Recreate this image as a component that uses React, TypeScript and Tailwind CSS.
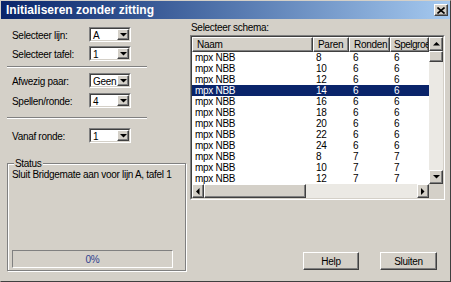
import React from "react";

const FONT = "font-['Liberation_Sans',Arial,sans-serif] tracking-[-0.3px]";

const ROWS = [
  ["8", "6", "6"],
  ["10", "6", "6"],
  ["12", "6", "6"],
  ["14", "6", "6"],
  ["16", "6", "6"],
  ["18", "6", "6"],
  ["20", "6", "6"],
  ["22", "6", "6"],
  ["24", "6", "6"],
  ["8", "7", "7"],
  ["10", "7", "7"],
  ["12", "7", "7"],
];

const COLS = [
  { label: "Naam", w: "w-[121px]" },
  { label: "Paren", w: "w-[36px]" },
  { label: "Ronden", w: "w-[41px]" },
  { label: "Spelgroe", w: "w-[39px]" },
];

// classic win32 bevels
const raised =
  "border border-white border-r-[#404040] border-b-[#404040] shadow-[inset_-1px_-1px_0_#808080] bg-[#d4d0c8]";

function Sunken({ className = "", children }: { className?: string; children?: React.ReactNode }) {
  return (
    <div className={`border border-[#808080] border-r-white border-b-white ${className}`}>
      <div className="h-full w-full border border-[#404040] border-r-[#d4d0c8] border-b-[#d4d0c8]">
        {children}
      </div>
    </div>
  );
}

function Arrow({ dir }: { dir: "up" | "down" | "left" | "right" }) {
  const d = {
    up: "M0 3.5h7L3.5 0z",
    down: "M0 0h7L3.5 3.5z",
    left: "M3.5 0v7L0 3.5z",
    right: "M0 0v7l3.5-3.5z",
  }[dir];
  const vert = dir === "up" || dir === "down";
  return (
    <svg width={vert ? 7 : 4} height={vert ? 4 : 7} viewBox={vert ? "0 0 7 4" : "0 0 4 7"}>
      <path d={d} fill="#000" />
    </svg>
  );
}

function Combo({ value }: { value: string }) {
  return (
    <Sunken className="h-[15px] w-[42px]">
      <div className="flex h-full bg-white">
        <span className="flex-1 pl-[2px] pt-[1px] text-[10px] leading-[11px]">{value}</span>
        <span className={`flex w-[12px] items-center justify-center ${raised}`}>
          <Arrow dir="down" />
        </span>
      </div>
    </Sunken>
  );
}

function Field({ label, value, className = "" }: { label: string; value: string; className?: string }) {
  return (
    <div className={`flex items-center ${className}`}>
      <span className="w-[82px] pl-[5px] pt-[1px] text-[10px] leading-[11px]">{label}</span>
      <Combo value={value} />
    </div>
  );
}

function Separator({ className = "" }: { className?: string }) {
  return <div className={`h-[2px] w-[140px] border-t border-[#808080] border-b border-b-white ${className}`} />;
}

function ListView() {
  return (
    <Sunken className="h-[165px] w-[255px]">
      <div className="flex h-full flex-col bg-white">
        <div className="flex min-h-0 flex-1">
          <div className="flex w-[237px] flex-col overflow-hidden">
            <div className="flex h-[15px] shrink-0">
              {COLS.map((c, i) => (
                <div
                  key={c.label}
                  className={`${c.w} ${raised} shrink-0 overflow-hidden whitespace-nowrap pt-[1px] text-[10px] leading-[11px] ${
                    i === 3 ? "pl-[3px] tracking-[-0.5px]" : "pl-[4px]"
                  }`}
                >
                  {c.label}
                </div>
              ))}
            </div>
            {ROWS.map((r, i) => {
              const sel = i === 3;
              return (
                <div
                  key={i}
                  className={`flex h-[11px] shrink-0 text-[10px] leading-[11px] ${
                    sel ? "bg-[#0a246a] text-white" : "text-black"
                  }`}
                >
                  <span className="w-[121px] pl-[3px]">mpx NBB</span>
                  <span className="w-[36px] pl-[3px]">{r[0]}</span>
                  <span className="w-[41px] pl-[4px]">{r[1]}</span>
                  <span className="w-[39px] pl-[4px]">{r[2]}</span>
                </div>
              );
            })}
          </div>
          <div className="flex w-[14px] flex-col bg-[#ebe9e4]">
            <div className={`flex h-[14px] items-center justify-center ${raised}`}>
              <Arrow dir="up" />
            </div>
            <div className={`h-[11px] ${raised}`} />
            <div className="flex-1" />
            <div className={`flex h-[14px] items-center justify-center ${raised}`}>
              <Arrow dir="down" />
            </div>
          </div>
        </div>
        <div className="flex h-[14px] shrink-0">
          <div className="flex w-[237px] bg-[#ebe9e4]">
            <div className={`flex w-[12px] items-center justify-center ${raised}`}>
              <Arrow dir="left" />
            </div>
            <div className={`w-[102px] ${raised}`} />
            <div className="flex-1" />
            <div className={`flex w-[12px] items-center justify-center ${raised}`}>
              <Arrow dir="right" />
            </div>
          </div>
          <div className="w-[14px] bg-[#d4d0c8]" />
        </div>
      </div>
    </Sunken>
  );
}

function Button({ label, w }: { label: string; w: string }) {
  return (
    <button
      className={`flex h-[18px] ${w} items-center justify-center border border-white border-r-[#404040] border-b-[#404040] bg-[#d4d0c8] shadow-[inset_-1px_-1px_0_#808080] text-[10px] leading-[11px] text-black`}
    >
      {label}
    </button>
  );
}

export default function App() {
  return (
    <div
      className={`${FONT} flex h-[282px] w-[451px] flex-col overflow-hidden border border-[#d4d0c8] border-r-[#404040] border-b-[#404040] bg-[#d4d0c8] text-black`}
    >
      {/* title bar */}
      <div className="flex h-[18px] shrink-0 items-center bg-linear-to-r from-[#0a246a] to-[#a6caf0] pl-[5px] pr-[2px]">
        <span className="flex-1 text-[12px] font-bold leading-[12px] tracking-normal text-white">
          Initialiseren zonder zitting
        </span>
        <span className={`flex h-[12px] w-[14px] items-center justify-center ${raised}`}>
          <svg width="8" height="7" viewBox="0 0 8 7">
            <path d="M0.5 0.5l7 6M7.5 0.5l-7 6" stroke="#000" strokeWidth="1.6" />
          </svg>
        </span>
      </div>

      <div className="flex flex-1">
        {/* left column */}
        <div className="ml-[6px] flex w-[180px] flex-col">
          <Field label="Selecteer lijn:" value="A" className="mt-[8px]" />
          <Field label="Selecteer tafel:" value="1" className="mt-[4px]" />
          <Separator className="mt-[5px]" />
          <Field label="Afwezig paar:" value="Geen" className="mt-[5px]" />
          <Field label="Spellen/ronde:" value="4" className="mt-[5px]" />
          <Separator className="mt-[9px]" />
          <Field label="Vanaf ronde:" value="1" className="mt-[9px]" />

          <div className="relative mt-[20px] flex h-[108px] w-[179px] flex-col border border-[#808080] shadow-[1px_1px_0_white,inset_1px_1px_0_white]">
            <span className="absolute -top-[6px] left-[6px] bg-[#d4d0c8] px-[1px] text-[10px] leading-[11px]">
              Status
            </span>
            <p className="pl-[4px] pt-[5px] text-[10px] leading-[11px] whitespace-nowrap">
              Sluit Bridgemate aan voor lijn A, tafel 1
            </p>
            <div className="ml-[4px] mt-auto mb-[2px] flex h-[18px] w-[161px] items-center justify-center border border-[#808080] border-r-white border-b-white text-[10px] leading-[11px] text-[#2e3f8f]">
              0%
            </div>
          </div>
        </div>

        {/* right column */}
        <div className="ml-[3px] flex w-[255px] flex-col">
          <span className="mt-[3px] pl-[1px] text-[10px] leading-[11px]">Selecteer schema:</span>
          <div className="mt-[2px]">
            <ListView />
          </div>
          <div className="mt-[52px] flex justify-end gap-[21px] pr-[8px]">
            <Button label="Help" w="w-[56px]" />
            <Button label="Sluiten" w="w-[57px]" />
          </div>
        </div>
      </div>
    </div>
  );
}
